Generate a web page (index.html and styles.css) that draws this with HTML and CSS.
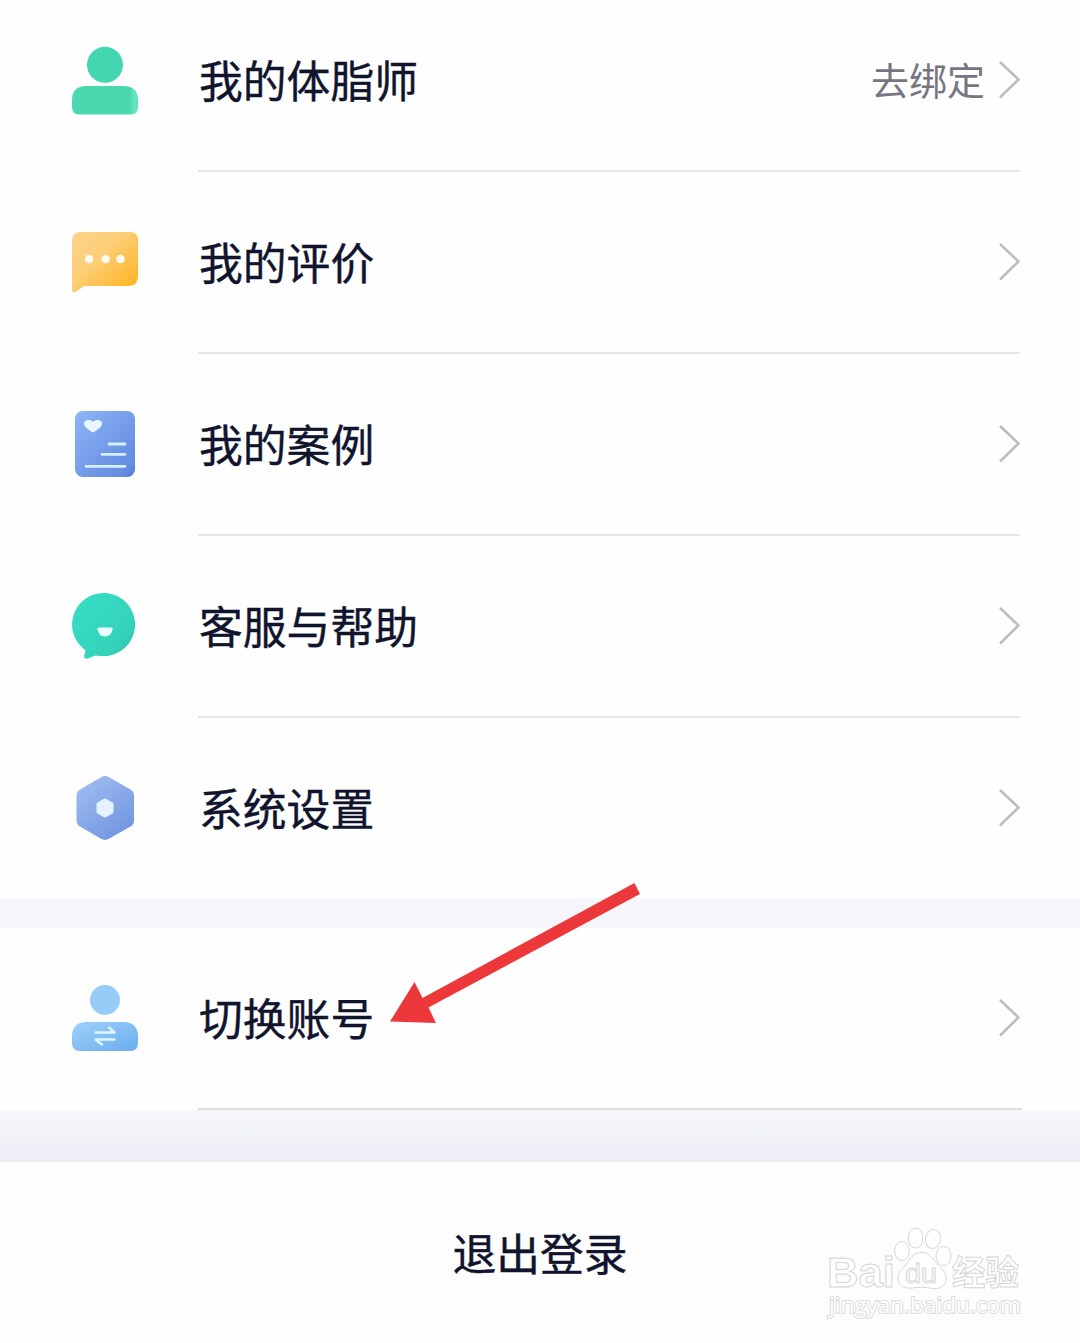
FILE: index.html
```html
<!DOCTYPE html>
<html lang="zh-CN">
<head>
  <meta charset="UTF-8" />
  <meta name="viewport" content="width=device-width, initial-scale=1.0"/>
  <title>我的</title>
  <link rel="stylesheet" href="styles.css">
</head>
<body>
<main class="page">
  <ul class="menu first">
    <li class="row">
      <svg class="icon" viewBox="0 0 90 90">
        <defs><linearGradient id="green" x1="0" x2="1"><stop offset=".88" stop-color="#4ad9ae"/><stop offset=".93" stop-color="#62e3bf"/></linearGradient></defs>
        <circle cx="45" cy="28.8" r="18" fill="#44d5b1"/>
        <path d="M26 50H64C73 50 78 55 78 64V71Q78 78.5 70.500 78.500H19.500Q12 78.500 12 71V64C12 55 17 50 26 50Z" fill="url(#green)"/>
      </svg>
      <div class="line"><span class="label">我的体脂师</span><span class="hint">去绑定</span><svg class="chevron" viewBox="0 0 22 40"><path d="M2 2 20.500 19.500 2 37.500"/></svg></div>
    </li>
    <li class="row">
      <svg class="icon" viewBox="0 0 90 90">
        <defs><linearGradient id="yellow" x1="0" y1="0" x2="1" y2="1"><stop offset="0" stop-color="#fbd28c"/><stop offset=".4" stop-color="#fdcf78"/><stop offset="1" stop-color="#fcb017"/></linearGradient></defs>
        <path d="M21 14H70Q78 14 78 22V58Q78 68 68 68H24L17 73Q12 76 12 71V23Q12 14 21 14Z" fill="url(#yellow)"/>
        <g fill="#fffaf0"><circle cx="29" cy="41" r="4.300"/><circle cx="45.500" cy="41" r="4.300"/><circle cx="60.500" cy="41" r="4.300"/></g>
      </svg>
      <div class="line"><span class="label">我的评价</span><svg class="chevron" viewBox="0 0 22 40"><path d="M2 2 20.500 19.500 2 37.500"/></svg></div>
    </li>
    <li class="row">
      <svg class="icon" viewBox="0 0 90 90">
        <defs><linearGradient id="blue" x1="0" y1="0" x2="1" y2="1"><stop offset="0" stop-color="#8fb4f6"/><stop offset=".9" stop-color="#628be0"/><stop offset="1" stop-color="#4373d2"/></linearGradient></defs>
        <rect x="15" y="11" width="60" height="66" rx="8" fill="url(#blue)"/>
        <path d="M33 32.500C28 29.500 24 27 24 23.500C24 19.500 30 18.800 33 21.800C36 18.800 42 19.500 42 23.500C42 27 38 29.500 33 32.500Z" fill="#eaf7ff"/>
        <path d="M49 44H65M42 54.300H65M26 66.300H65" stroke="#d5efff" stroke-width="2.800" stroke-linecap="round"/>
      </svg>
      <div class="line"><span class="label">我的案例</span><svg class="chevron" viewBox="0 0 22 40"><path d="M2 2 20.500 19.500 2 37.500"/></svg></div>
    </li>
    <li class="row">
      <svg class="icon" viewBox="0 0 90 90">
        <defs><linearGradient id="teal" x1="0" y1="0" x2="1" y2="1"><stop offset="0" stop-color="#38dfc9"/><stop offset=".75" stop-color="#34d1b9"/><stop offset="1" stop-color="#22b99f"/></linearGradient></defs>
        <path d="M25.500 68.300A31.500 31.500 0 1 1 43.500 74Q39 74 35.500 73.500L27 76.700Q24 77.500 24.200 74Z" fill="url(#teal)"/>
        <path d="M38.500 45.500H51.500Q53 45.500 52.500 47.500Q51 54.500 45 54.500T37.500 47.500Q37 45.500 38.500 45.500Z" fill="#eafffb"/>
      </svg>
      <div class="line"><span class="label">客服与帮助</span><svg class="chevron" viewBox="0 0 22 40"><path d="M2 2 20.500 19.500 2 37.500"/></svg></div>
    </li>
    <li class="row">
      <svg class="icon" viewBox="0 0 90 90">
        <defs><linearGradient id="indigo" x1="0" y1="0" x2=".7" y2="1"><stop offset="0" stop-color="#a5bff0"/><stop offset="1" stop-color="#7196e2"/></linearGradient></defs>
        <path d="M41 13.200Q45 11 49 13.200L70.500 25.500Q74 27.500 74 31.500V56.500Q74 60.500 70.500 62.500L49 74.800Q45 77 41 74.800L20 62.500Q16.500 60.500 16.500 56.500V31.500Q16.500 27.500 20 25.500Z" fill="url(#indigo)"/>
        <path d="M45 36.500 51.500 40.200V47.800L45 51.500 38.500 47.800V40.200Z" fill="#e6f2ff" stroke="#e6f2ff" stroke-width="4" stroke-linejoin="round"/>
      </svg>
      <div class="line"><span class="label">系统设置</span><svg class="chevron" viewBox="0 0 22 40"><path d="M2 2 20.500 19.500 2 37.500"/></svg></div>
    </li>
  </ul>

  <ul class="menu account">
    <li class="row">
      <svg class="icon" viewBox="0 0 90 90">
        <defs><linearGradient id="sky" x1="0" y1="0" x2="1" y2="1"><stop offset="0" stop-color="#9fd0fa"/><stop offset="1" stop-color="#69aeee"/></linearGradient></defs>
        <circle cx="45" cy="26" r="15" fill="#98cbf8"/>
        <path d="M26 48H64C73 48 78 54 78 62V69Q78 77 70 77H20Q12 77 12 69V62C12 54 17 48 26 48Z" fill="url(#sky)"/>
        <path d="M35.500 58.500H54.500L49 53.500M54.500 65.500H35.500L42 70.500" fill="none" stroke="#dff6ff" stroke-width="2.400" stroke-linecap="round" stroke-linejoin="round"/>
      </svg>
      <div class="line"><span class="label">切换账号</span><svg class="chevron" viewBox="0 0 22 40"><path d="M2 2 20.500 19.500 2 37.500"/></svg></div>
    </li>
  </ul>

  <div class="shade"></div>
  <button class="logout">退出登录</button>

  <svg class="arrow" viewBox="0 0 250 142"><path d="M244.500 0 250 11 38.500 124.500 46 140 0 138.500 24.500 99 32.500 115Z"/></svg>

  <svg class="watermark" viewBox="0 0 230 125">
    <g class="outline">
      <text x="17" y="77" font-size="43" font-weight="700" textLength="68" lengthAdjust="spacingAndGlyphs">Bai</text>
      <ellipse cx="92" cy="41" rx="7.500" ry="9.500"/>
      <ellipse cx="105.500" cy="28" rx="7.300" ry="10"/>
      <ellipse cx="123" cy="29" rx="7.500" ry="9.500" transform="rotate(10 123 29)"/>
      <ellipse cx="133.500" cy="46" rx="7.500" ry="9.500"/>
      <path d="M112 42.500C120 42.500 123 49 128 55C133 60 137 63 136 70C135 77 129 79 123 78.500C115 77 108 77 102 78C94 79 88 75 88 68C88 61 94 58 98 52C101 47 105 42.500 112 42.500Z"/>
      <text x="95" y="73" font-size="27" textLength="32" lengthAdjust="spacingAndGlyphs">du</text>
      <text class="cjk" x="142" y="75" font-size="34" textLength="67" lengthAdjust="spacingAndGlyphs">经验</text>
      <text class="url" x="19" y="103" font-size="22" textLength="192" lengthAdjust="spacingAndGlyphs">jingyan.baidu.com</text>
    </g>
  </svg>
</main>
</body>
</html>
```
FILE: styles.css
```css
* { box-sizing: border-box; }
body { margin: 0; background: #fefefe; font-family: "Noto Sans CJK SC", sans-serif; color: #11142d; }
.page { position: relative; height: 1343px; overflow: hidden; }
.menu { list-style: none; margin: 0; padding: 0; background: #fefefe; }
.first { height: 908px; margin-top: -10px; }
.row { display: flex; align-items: center; height: 182px; padding: 0 60px; }
.icon { width: 90px; height: 90px; flex: none; margin-right: 48px; }
.line { display: flex; align-items: center; flex: 1; height: 182px; border-bottom: 2px solid #e5e5e6; }
.first .row:last-child .line { border-bottom-color: transparent; }
.label { flex: 1; padding: 0 0 2px 1px; font-size: 43.800px; line-height: 64px; -webkit-text-stroke: .4px; }
.hint { padding-bottom: 2px; font-size: 38px; line-height: 56px; color: #777580; margin-right: 13px; }
.chevron { width: 22px; height: 40px; fill: none; stroke: #bdbdbd; stroke-width: 2.600px; }
.account { border-top: 30px solid #f6f6fa; height: 212px; }
.account .line { border-bottom-color: #dededf; margin-right: -2px; padding-right: 2px; }
.shade { height: 52px; background: linear-gradient(#f7f7fa, #f2f3f8 50%, #ebecf5); }
.logout { display: block; width: 100%; height: 181px; border: none; padding: 0 0 2px; background: #fdfdfd; color: #11142d; font-family: inherit; font-size: 43.800px; -webkit-text-stroke: .4px; }

/* overlays */
.arrow { position: absolute; left: 390px; top: 883px; width: 250px; height: 142px; fill: #ec383b; }
.watermark { position: absolute; left: 810px; top: 1210px; width: 230px; height: 125px; }
.outline { fill: #fff; stroke: #d6d6d6; stroke-width: 1px; font-family: "Liberation Sans", sans-serif; }
.outline .cjk { font-family: "Noto Sans CJK SC", sans-serif; font-weight: 700; }
.outline .url { font-family: "Open Sans", sans-serif; stroke: #dcdcdc; stroke-width: 2px; paint-order: stroke; }
```
